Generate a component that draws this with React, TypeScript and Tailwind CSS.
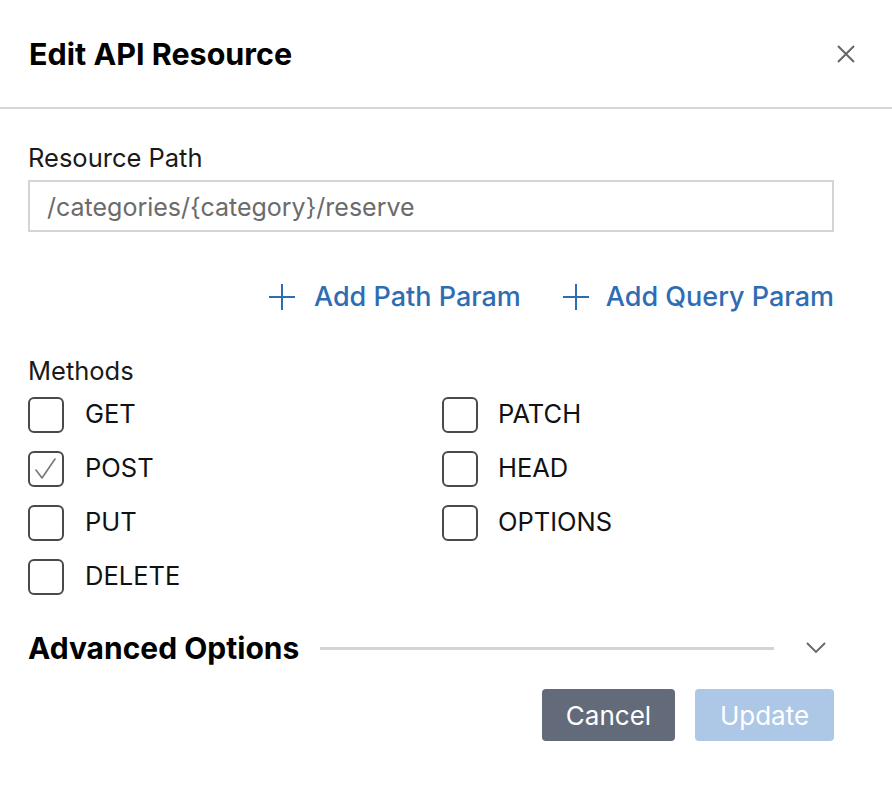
import React from "react";

const methodsLeft = [
  { name: "GET", checked: false },
  { name: "POST", checked: true },
  { name: "PUT", checked: false },
  { name: "DELETE", checked: false },
];
const methodsRight = [
  { name: "PATCH", checked: false },
  { name: "HEAD", checked: false },
  { name: "OPTIONS", checked: false },
];

function Checkbox({ checked }: { checked: boolean }) {
  return (
    <div className="w-[36px] h-[36px] rounded-[6px] border-2 border-[#4a4a4a] flex items-center justify-center shrink-0">
      {checked && (
        <svg width="26" height="26" viewBox="0 0 26 26" fill="none">
          <path d="M3 14 L9 22 L22 3" stroke="#777" strokeWidth="1.6" strokeLinecap="round" strokeLinejoin="round" />
        </svg>
      )}
    </div>
  );
}

function Plus() {
  return (
    <svg width="28" height="28" viewBox="0 0 28 28" fill="none">
      <path d="M14 1 V27 M1 14 H27" stroke="#2f6db3" strokeWidth="2" />
    </svg>
  );
}

export default function App() {
  return (
    <div className="w-[892px] h-[796px] bg-white font-['Inter',sans-serif] text-[#111]">
      <div className="h-[109px] border-b-2 border-[#d8d8d8] flex items-center justify-between pl-[29px] pr-[37px]">
        <h1 className="text-[30.5px] leading-[36px] font-bold tracking-[0px] text-black">Edit API Resource</h1>
        <svg width="18" height="18" viewBox="0 0 18 18" fill="none">
          <path d="M1 1 L17 17 M17 1 L1 17" stroke="#666" strokeWidth="2" />
        </svg>
      </div>
      <div className="pl-[28px] pr-[58px]">
        <div className="mt-[35px] text-[25.5px] leading-[28px] text-[#1a1a1a]">Resource Path</div>
        <div className="mt-[8px] h-[52px] border-2 border-[#d4d4d4] flex items-center px-[17px] pt-[3px] text-[25px] text-[#6b6b6b]">
          /categories/{"{category}"}/reserve
        </div>
        <div className="mt-[49px] flex justify-end items-center gap-[41px] h-[32px] text-[27px] font-medium text-[#2f6db3]">
          <div className="flex items-center gap-[18px]">
            <Plus />
            <span>Add Path Param</span>
          </div>
          <div className="flex items-center gap-[16px]">
            <Plus />
            <span>Add Query Param</span>
          </div>
        </div>
        <div className="mt-[44px] text-[25.5px] leading-[28px] text-[#1a1a1a]">Methods</div>
        <div className="mt-[12px] grid grid-cols-[414px_1fr]">
          <div className="flex flex-col gap-[18px]">
            {methodsLeft.map((m) => (
              <div key={m.name} className="flex items-center gap-[21px] h-[36px]">
                <Checkbox checked={m.checked} />
                <span className="text-[25.5px] leading-[30px] -mt-[3px] text-[#111]">{m.name}</span>
              </div>
            ))}
          </div>
          <div className="flex flex-col gap-[18px]">
            {methodsRight.map((m) => (
              <div key={m.name} className="flex items-center gap-[20px] h-[36px]">
                <Checkbox checked={m.checked} />
                <span className="text-[25.5px] leading-[30px] -mt-[3px] text-[#111]">{m.name}</span>
              </div>
            ))}
          </div>
        </div>
        <div className="mt-[36px] h-[34px] flex items-center">
          <span className="text-[30px] leading-[34px] font-bold text-black whitespace-nowrap">Advanced Options</span>
          <div className="ml-[21px] w-[454px] h-[3px] bg-[#d4d4d4]" />
          <div className="flex-1 flex justify-end pr-[8px]">
            <svg width="20" height="12" viewBox="0 0 20 12" fill="none">
              <path d="M1 1 L10 10 L19 1" stroke="#666" strokeWidth="1.8" />
            </svg>
          </div>
        </div>
        <div className="mt-[24px] flex justify-end gap-[20px]">
          <button className="w-[133px] h-[52px] rounded-[4px] bg-[#636b7a] text-white text-[26px]">Cancel</button>
          <button className="w-[139px] h-[52px] rounded-[4px] bg-[#adc8e6] text-white text-[26px]">Update</button>
        </div>
      </div>
    </div>
  );
}
